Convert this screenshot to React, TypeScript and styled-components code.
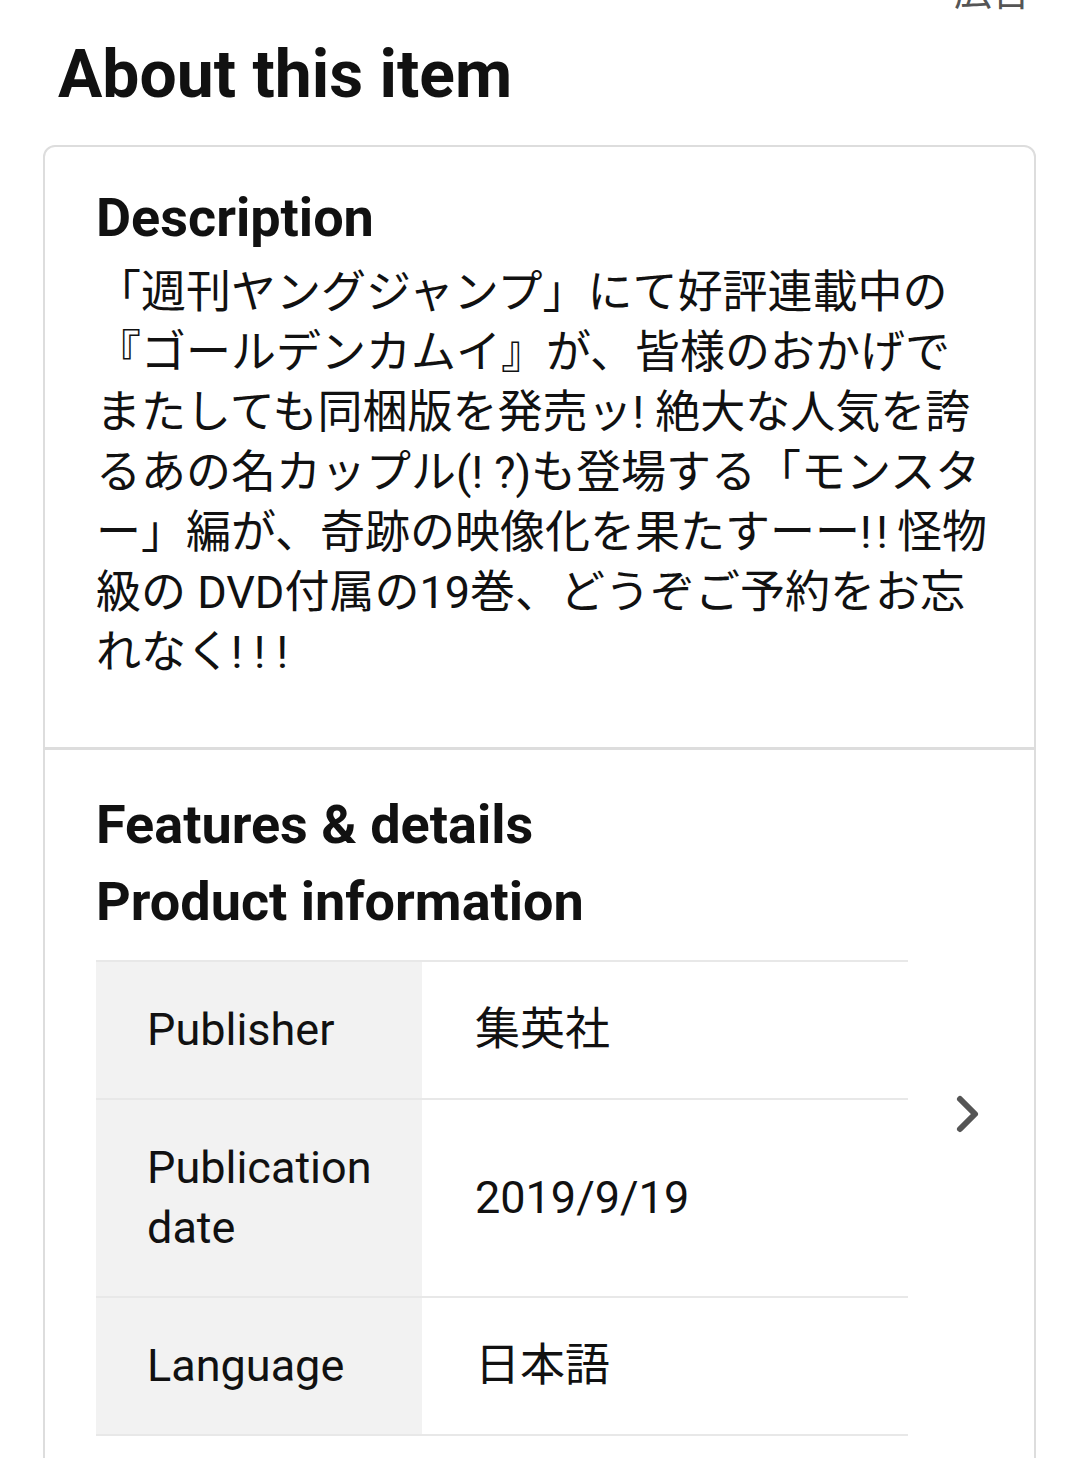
import React from "react";
import styled, { createGlobalStyle } from "styled-components";

const GlobalStyle = createGlobalStyle`
  html, body {
    margin: 0;
    padding: 0;
    background: #fff;
  }
  body {
    font-family: Roboto, "Noto Sans CJK JP", sans-serif;
    color: #111;
  }
`;

type InfoRow = { label: string; value: string };

const productInfo: InfoRow[] = [
  { label: "Publisher", value: "集英社" },
  { label: "Publication date", value: "2019/9/19" },
  { label: "Language", value: "日本語" },
];

const descriptionLines = [
  "「週刊ヤングジャンプ」にて好評連載中の",
  "『ゴールデンカムイ』が、皆様のおかげで",
  "またしても同梱版を発売ッ! 絶大な人気を誇",
  "るあの名カップル(! ?)も登場する「モンスタ",
  "ー」編が、奇跡の映像化を果たすーー!\u200A!\u2009怪物",
  "級の DVD付属の19巻、どうぞご予約をお忘",
  "れなく! ! !",
];

export default function App() {
  return (
    <>
      <GlobalStyle />
      <Page>
        <AdRow>
          <AdLabel>広告</AdLabel>
        </AdRow>
        <PageTitle>About this item</PageTitle>

        <Card>
          <Section>
            <SectionHeading>Description</SectionHeading>
            <Description>
              {descriptionLines.map((line, i) => (
                <React.Fragment key={i}>
                  {line}
                  {i < descriptionLines.length - 1 && <br />}
                </React.Fragment>
              ))}
            </Description>
          </Section>

          <Section $last>
            <SectionHeading>Features &amp; details</SectionHeading>
            <SubHeading>Product information</SubHeading>

            <TableRow>
              <InfoTable>
                <tbody>
                  {productInfo.map((row) => (
                    <tr key={row.label}>
                      <LabelCell>{row.label}</LabelCell>
                      <ValueCell>{row.value}</ValueCell>
                    </tr>
                  ))}
                </tbody>
              </InfoTable>
              <ArrowColumn>
                <svg width="26" height="40" viewBox="0 0 26 40" fill="none">
                  <polyline
                    points="5,5 20,20 5,35"
                    stroke="#555"
                    strokeWidth="6"
                    strokeLinecap="round"
                    strokeLinejoin="round"
                  />
                </svg>
              </ArrowColumn>
            </TableRow>
          </Section>
        </Card>
      </Page>
    </>
  );
}

const Page = styled.div`
  padding: 0 44px 0 43px;
`;

const AdRow = styled.div`
  height: 42px;
  display: flex;
  justify-content: flex-end;
  align-items: flex-end;
  overflow: hidden;
  padding-right: 6px;
`;

const AdLabel = styled.span`
  font-family: "Noto Sans CJK JP", sans-serif;
  font-size: 38px;
  line-height: 38px;
  color: #555;
  margin-bottom: 34px;
`;

const PageTitle = styled.h1`
  margin: 0 0 37px 15px;
  font-size: 66px;
  line-height: 66px;
  font-weight: 700;
  color: #111;
`;

const Card = styled.div`
  border: 2px solid #ddd;
  border-radius: 12px;
  background: #fff;
`;

const Section = styled.div<{ $last?: boolean }>`
  padding: ${(p) => (p.$last ? "48px 0 80px 51px" : "44px 52px 64px 51px")};
  border-bottom: ${(p) => (p.$last ? "none" : "3px solid #ddd")};
`;

const SectionHeading = styled.h2`
  margin: 0;
  font-size: 54px;
  line-height: 54px;
  font-weight: 700;
  color: #111;
`;

const SubHeading = styled(SectionHeading)`
  margin: 23px 0 31px;
`;

const Description = styled.p`
  margin: 18px 0 0;
  font-size: 45px;
  line-height: 60px;
  color: #111;
  white-space: nowrap;
`;

const TableRow = styled.div`
  display: flex;
  align-items: flex-start;
`;

const InfoTable = styled.table`
  width: 812px;
  border-collapse: collapse;
  border-top: 2px solid #e8e8e8;
  flex-shrink: 0;

  tr {
    border-bottom: 2px solid #e8e8e8;
  }
`;

const LabelCell = styled.td`
  width: 326px;
  box-sizing: border-box;
  padding: 38px 30px 38px 51px;
  background: #f2f2f2;
  font-size: 45px;
  line-height: 60px;
  color: #111;
  vertical-align: middle;
`;

const ValueCell = styled.td`
  padding: 38px 20px 38px 53px;
  font-size: 45px;
  line-height: 60px;
  color: #111;
  vertical-align: middle;
`;

const ArrowColumn = styled.div`
  flex: 1;
  display: flex;
  justify-content: center;
  padding-top: 134px;
  padding-right: 6px;
`;
